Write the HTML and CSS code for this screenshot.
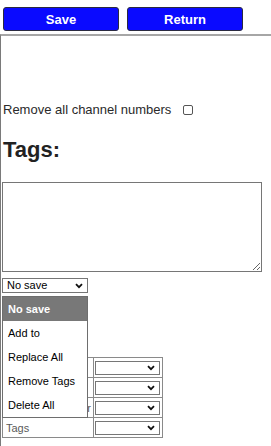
FILE: index.html
```html
<!DOCTYPE html>
<html>
<head>
<meta charset="utf-8">
<link rel="stylesheet" href="styles.css">
</head>
<body>
<div class="toolbar">
  <button class="btn">Save</button>
  <button class="btn">Return</button>
</div>
<div class="panel">
  <label class="check-row"><span>Remove all channel numbers</span><input type="checkbox" class="check"></label>
  <h2 class="heading">Tags:</h2>
  <textarea class="tags"></textarea>
  <div class="select-wrap">
    <select class="mode">
      <option>No save</option>
      <option>Add to</option>
      <option>Replace All</option>
      <option>Remove Tags</option>
      <option>Delete All</option>
    </select>
    <ul class="dropdown">
      <li class="opt active">No save</li>
      <li class="opt">Add to</li>
      <li class="opt">Replace All</li>
      <li class="opt">Remove Tags</li>
      <li class="opt">Delete All</li>
    </ul>
  </div>
  <table class="fields">
    <colgroup><col class="c1"><col class="c2"></colgroup>
    <tr><td class="label">Name</td><td class="cell"><select class="mini"></select></td></tr>
    <tr><td class="label">Group</td><td class="cell"><select class="mini"></select></td></tr>
    <tr><td class="label">Channel Provider</td><td class="cell"><select class="mini"></select></td></tr>
    <tr><td class="label">Tags</td><td class="cell"><select class="mini"></select></td></tr>
  </table>
</div>
</body>
</html>
```
FILE: styles.css
```css
* { box-sizing: border-box; }
body {
  margin: 0;
  font-family: "Liberation Sans", Arial, sans-serif;
  color: #222;
  background: #fff;
}
.toolbar {
  display: flex;
  gap: 8px;
  padding: 7px 3px 3px;
}
.btn {
  width: 116px;
  height: 24px;
  margin: 0;
  padding: 0;
  background: #0a0aff;
  color: #fff;
  border: 1px solid #2a2a40;
  border-radius: 3px;
  font-family: "Liberation Sans", Arial, sans-serif;
  font-size: 13px;
  font-weight: bold;
}
.panel {
  border-top: 2px solid #a6a6a6;
  border-left: 1px solid #7a7a7a;
  padding-left: 1px;
  min-height: 412px;
  overflow: hidden;
}
.check-row {
  display: flex;
  align-items: center;
  gap: 12px;
  margin-top: 66px;
  padding-left: 1px;
  font-size: 13px;
  line-height: 15px;
  color: #2a2a2a;
}
.check {
  appearance: none;
  -webkit-appearance: none;
  width: 10px;
  height: 10px;
  margin: 0;
  border: 1px solid #555;
  border-radius: 2px;
  background: #fff;
}
.heading {
  margin: 20px 0 0;
  padding-left: 1px;
  font-size: 22px;
  line-height: 26px;
  font-weight: bold;
  color: #222;
}
.tags {
  display: block;
  width: 260px;
  height: 90px;
  margin: 19px 0 0;
  border: 1px solid #767676;
  font-family: "Liberation Mono", monospace;
}
.select-wrap {
  position: relative;
  margin-top: 6px;
  width: 86px;
}
.mode, .mini {
  appearance: none;
  -webkit-appearance: none;
  display: block;
  margin: 0;
  border: 1px solid #767676;
  border-radius: 0;
  background-color: #fff;
  background-image: url("data:image/svg+xml;utf8,<svg xmlns='http://www.w3.org/2000/svg' width='8' height='6' viewBox='0 0 8 6'><path d='M1 1.2 L4 4.2 L7 1.2' fill='none' stroke='%23111' stroke-width='1.8'/></svg>");
  background-repeat: no-repeat;
  font-family: "Liberation Sans", Arial, sans-serif;
  font-size: 11px;
  color: #000;
}
.mode {
  width: 86px;
  height: 15px;
  padding: 0 0 0 4px;
  line-height: 13px;
  background-position: right 4px center;
}
.dropdown {
  position: absolute;
  top: 18px;
  left: 0;
  width: 86px;
  margin: 0;
  padding: 0;
  list-style: none;
  background: #fff;
  border: 1px solid #6e6e6e;
  z-index: 2;
}
.opt {
  height: 24px;
  line-height: 24px;
  padding-left: 5px;
  font-size: 11px;
  color: #000;
}
.opt.active {
  background: #787878;
  color: #fff;
  font-weight: bold;
}
.fields {
  margin-top: 64px;
  border-collapse: collapse;
  table-layout: fixed;
  width: 160px;
  border: 1px solid #8a8a8a;
}
.c1 { width: 91px; }
.c2 { width: 69px; }
.fields td {
  border: 1px solid #8a8a8a;
  height: 20px;
  padding: 0;
  vertical-align: middle;
}
.label {
  padding-left: 3px !important;
  font-size: 11px;
  color: #5a5a5a;
  white-space: nowrap;
  overflow: hidden;
}
.mini {
  width: 65px;
  height: 14px;
  margin-left: 1px;
  background-position: right 4px center;
}
```
